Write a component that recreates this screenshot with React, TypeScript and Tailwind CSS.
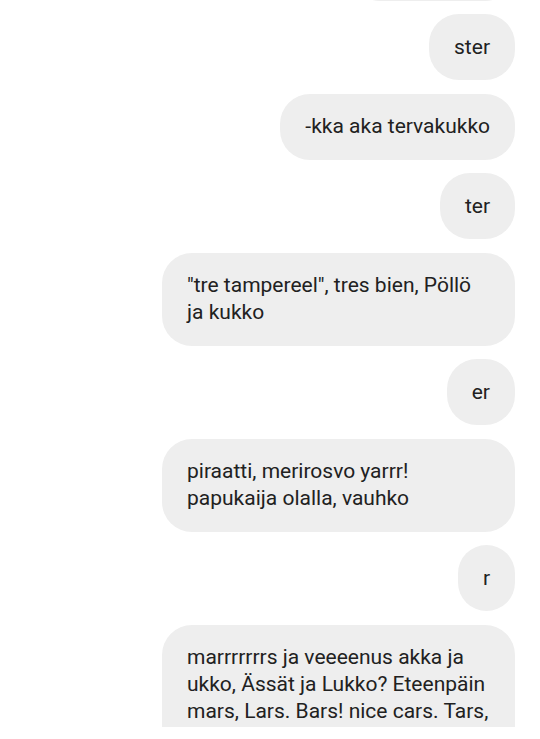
import React from "react";

const messages = [
  "",
  "ster",
  "-kka aka tervakukko",
  "ter",
  "\"tre tampereel\", tres bien, Pöllö ja kukko",
  "er",
  "piraatti, merirosvo yarrr! papukaija olalla, vauhko",
  "r",
  "marrrrrrrs ja veeeenus akka ja ukko, Ässät ja Lukko? Eteenpäin mars, Lars. Bars! nice cars. Tars, stars ja guitars",
];

export default function App() {
  return (
    <div className="w-[540px] h-[739px] bg-white overflow-hidden">
      <div className="h-[727px] overflow-hidden">
        <div
          className="flex flex-col items-end gap-[13.5px] pr-[25px] -mt-[65.5px]"
          style={{ fontFamily: "Roboto, 'Noto Sans', sans-serif" }}
        >
          {messages.map((m, i) => (
            <div
              key={i}
              className={
                "max-w-[353px] rounded-[30px] bg-[#eeeeee] px-[25px] py-[19.5px] text-[21px] leading-[27px] text-[#212121] " +
                (i === 0 ? "w-[165px]" : "")
              }
            >
              {m || "\u00a0"}
            </div>
          ))}
        </div>
      </div>
    </div>
  );
}
